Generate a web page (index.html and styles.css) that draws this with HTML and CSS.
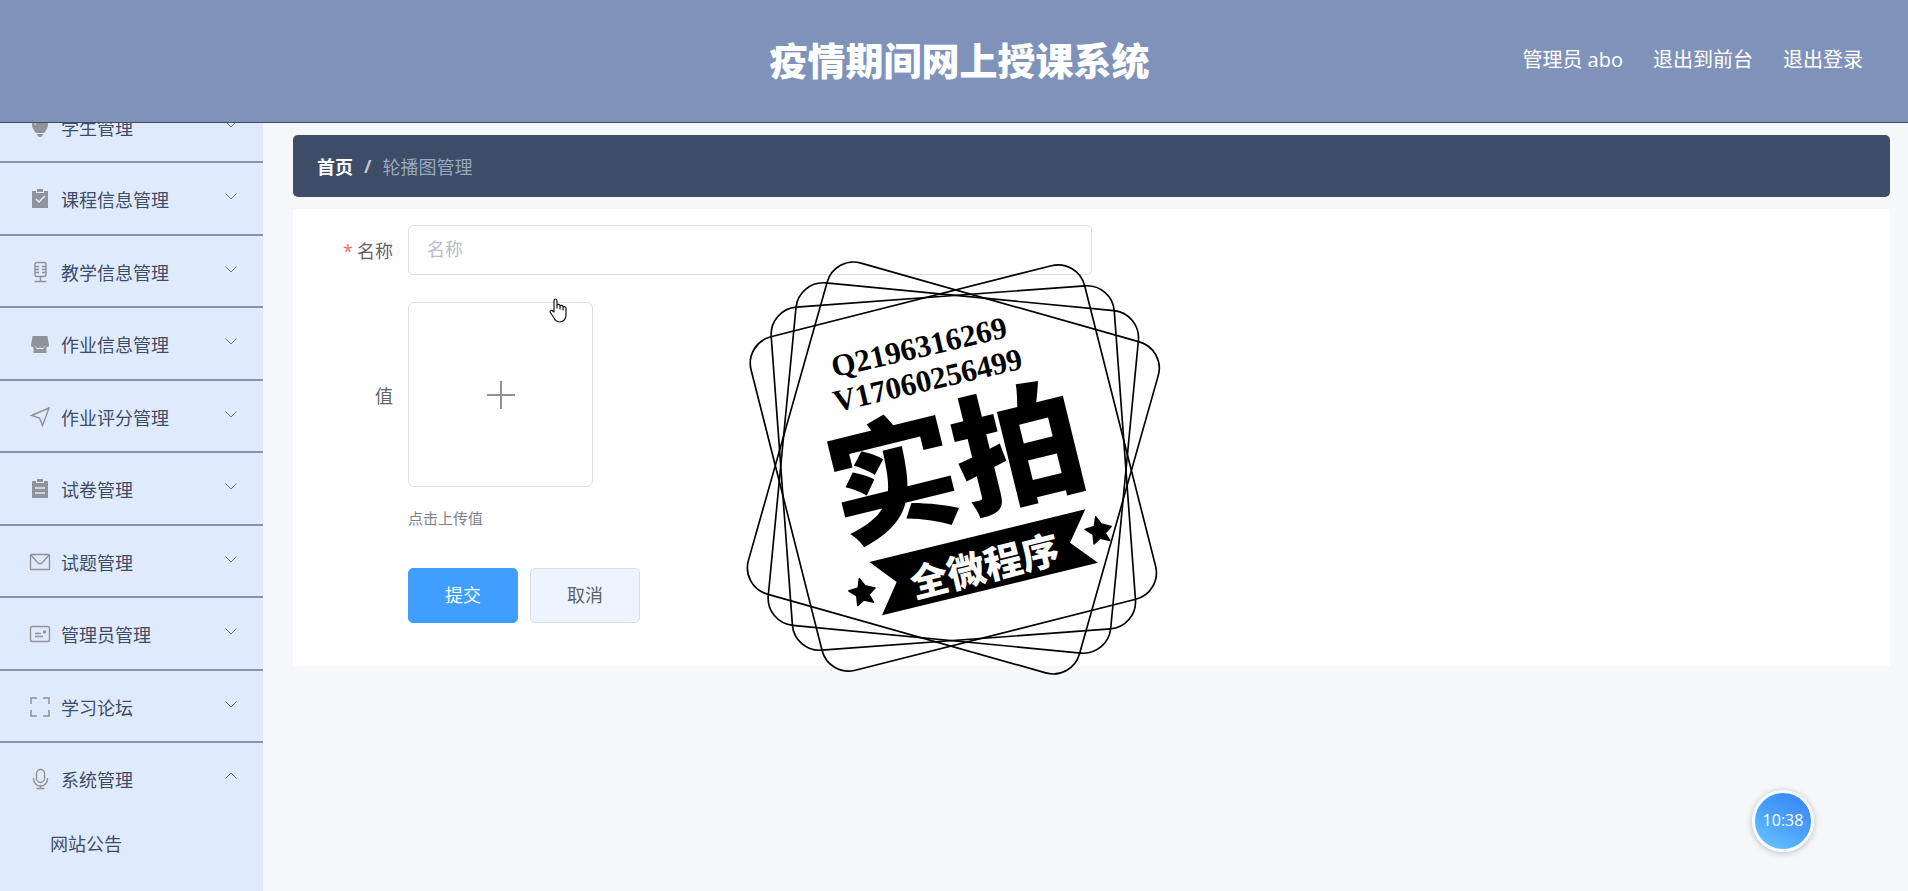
FILE: index.html
```html
<!DOCTYPE html>
<html lang="zh-CN">
<head>
    <meta charset="UTF-8">
    <meta name="viewport" content="width=device-width, initial-scale=1.0">
    <title>疫情期间网上授课系统</title>
    <link rel="stylesheet" href="styles.css">
</head>
<body>
    <svg width="0" height="0" class="sprite" aria-hidden="true">
        <symbol id="arrow" viewBox="0 0 12 12"><path d="M0.500 3.500 6 9 11.500 3.500" fill="none" stroke="currentColor"/></symbol>
    </svg>

    <header class="header">
        <h1 class="title">疫情期间网上授课系统</h1>
        <div class="user-nav">
            <span>管理员 abo</span>
            <a href="#">退出到前台</a>
            <a href="#">退出登录</a>
        </div>
    </header>

    <div class="container">
        <!-- Side menu -->
        <nav class="sidebar">
            <ul class="menu">
                <li class="menu-item">
                    <button type="button" class="menu-title">
                        <svg class="icon" viewBox="0 0 24 24"><path d="M12 2a8 8 0 0 1 8 8c0 3-2 5-4 8H8c-2-3-4-5-4-8a8 8 0 0 1 8-8z" fill="currentColor"/><path d="M9 19h6v1l-2 2h-2l-2-2z" fill="currentColor"/><path d="M7 10a5 5 0 0 1 4-5" fill="none" stroke="#e0eafd"/></svg>
                        <span>学生管理</span>
                        <svg class="arrow"><use href="#arrow"/></svg>
                    </button>
                </li>
                <li class="menu-item">
                    <button type="button" class="menu-title">
                        <svg class="icon" viewBox="0 0 24 24"><path d="M4 4h4v2h8V4h4v17H4zM9 2h6v3H9z" fill="currentColor"/><path d="m8 12 3 3 6-6" fill="none" stroke="#e0eafd" stroke-width="1.500"/></svg>
                        <span>课程信息管理</span>
                        <svg class="arrow"><use href="#arrow"/></svg>
                    </button>
                </li>
                <li class="menu-item">
                    <button type="button" class="menu-title">
                        <svg class="icon" viewBox="0 0 24 24" fill="none" stroke="currentColor" stroke-width="1.400"><rect x="7" y="2.500" width="11" height="14" rx="2"/><path d="M7 6.500h4M7 9.500h4M7 12.500h4M14 6.500h4M14 9.500h4M14 12.500h4M12.500 16.500V21M6.500 21.500h12"/></svg>
                        <span>教学信息管理</span>
                        <svg class="arrow"><use href="#arrow"/></svg>
                    </button>
                </li>
                <li class="menu-item">
                    <button type="button" class="menu-title">
                        <svg class="icon" viewBox="0 0 24 24" fill="currentColor"><path d="M4.500 4h15l1.500 9.500q0 1.500-2 1.500-1.500 0-2.500-1-1 1-2.300 1T12 14q-1 1-2.200 1T7.500 14q-1 1-2.500 1-2 0-2-1.500z"/><path d="M5.500 14.500h13V21h-13z"/><path d="M8 15.500q1.500 2 4 .500 2.500 1.500 4-.500" fill="none" stroke="#e0eafd" stroke-width="1.200"/></svg>
                        <span>作业信息管理</span>
                        <svg class="arrow"><use href="#arrow"/></svg>
                    </button>
                </li>
                <li class="menu-item">
                    <button type="button" class="menu-title">
                        <svg class="icon" viewBox="0 0 24 24" fill="none" stroke="currentColor" stroke-width="1.400"><path d="M21 3 3.500 10.500l8 2.500L14.500 20.500z"/></svg>
                        <span>作业评分管理</span>
                        <svg class="arrow"><use href="#arrow"/></svg>
                    </button>
                </li>
                <li class="menu-item">
                    <button type="button" class="menu-title">
                        <svg class="icon" viewBox="0 0 24 24"><path d="M4 4h4v2h8V4h4v17H4zM9 2h6v3H9z" fill="currentColor"/><path d="M7 11h10M7 16h10" stroke="#e0eafd" stroke-width="1.500"/></svg>
                        <span>试卷管理</span>
                        <svg class="arrow"><use href="#arrow"/></svg>
                    </button>
                </li>
                <li class="menu-item">
                    <button type="button" class="menu-title">
                        <svg class="icon" viewBox="0 0 24 24" fill="none" stroke="currentColor" stroke-width="1.400"><rect x="2.500" y="4.500" width="19" height="15" rx="1"/><path d="m3 5 7 8q2 1.500 4 0l7-8"/></svg>
                        <span>试题管理</span>
                        <svg class="arrow"><use href="#arrow"/></svg>
                    </button>
                </li>
                <li class="menu-item">
                    <button type="button" class="menu-title">
                        <svg class="icon" viewBox="0 0 24 24" fill="none" stroke="currentColor" stroke-width="1.400"><rect x="2.500" y="4.500" width="19" height="15" rx="1.500"/><path d="M7 11.500h6M7 14.500h8"/><circle cx="16.500" cy="10" r="1" fill="currentColor"/></svg>
                        <span>管理员管理</span>
                        <svg class="arrow"><use href="#arrow"/></svg>
                    </button>
                </li>
                <li class="menu-item">
                    <button type="button" class="menu-title">
                        <svg class="icon" viewBox="0 0 24 24" fill="none" stroke="currentColor" stroke-width="1.500"><path d="M3 9V3h6M15 3h6v6M21 15v6h-6M9 21H3v-6"/></svg>
                        <span>学习论坛</span>
                        <svg class="arrow"><use href="#arrow"/></svg>
                    </button>
                </li>
                <li class="menu-item opened">
                    <button type="button" class="menu-title">
                        <svg class="icon" viewBox="0 0 24 24" fill="none" stroke="currentColor" stroke-width="1.400"><rect x="8.500" y="2.500" width="8" height="13" rx="4"/><path d="M5.500 11v1a7 7 0 0 0 14 0v-1M12.500 19v2.500M8.500 21.500h8"/></svg>
                        <span>系统管理</span>
                        <svg class="arrow"><use href="#arrow"/></svg>
                    </button>
                    <a href="#" class="submenu-item">网站公告</a>
                </li>
            </ul>
        </nav>

        <main class="main">
            <div class="breadcrumb">
                <a href="#">首页</a>
                <span class="separator">/</span>
                <span>轮播图管理</span>
            </div>

            <div class="card">
                <form class="form">
                    <div class="form-item">
                        <label for="name" class="required">名称</label>
                        <input type="text" id="name" placeholder="名称">
                    </div>
                    <div class="form-item">
                        <label for="upload">值</label>
                        <button type="button" class="upload" id="upload" aria-label="上传">
                            <svg width="28" height="28" viewBox="0 0 28 28"><path d="M14 0v28M0 14h28" stroke="#8c939d" stroke-width="2"/></svg>
                        </button>
                    </div>
                    <p class="tip">点击上传值</p>
                    <div class="buttons">
                        <button type="submit" class="btn btn-primary">提交</button>
                        <button type="button" class="btn">取消</button>
                    </div>
                </form>
            </div>
        </main>
    </div>

    <!-- Stamp over the page -->
    <svg class="stamp" viewBox="0 0 1350 1350">
        <g fill="none" stroke="#000" stroke-width="5">
            <rect x="154" y="168" width="1032" height="1032" rx="82" transform="rotate(-14.200 670 684)"/>
            <rect x="154" y="168" width="1032" height="1032" rx="82" transform="rotate(-4.200 670 684)"/>
            <rect x="154" y="168" width="1032" height="1032" rx="82" transform="rotate(5.500 670 684)"/>
            <rect x="154" y="168" width="1032" height="1032" rx="82" transform="rotate(15.800 670 684)"/>
        </g>
        <text class="stamp-contact" transform="translate(312 412) rotate(-13)">Q2196316269</text>
        <text class="stamp-contact" transform="translate(318 516) rotate(-13)">V17060256499</text>
        <text class="stamp-big" transform="translate(336 900) rotate(-13.800)">实拍</text>
        <path d="M418 966 1066 808 1020 908 1104 968 456 1126 500 1026z"/>
        <text class="stamp-small" transform="translate(553 1075) rotate(-14)">全微程序</text>
        <g stroke="#000" stroke-width="4" stroke-linejoin="round">
            <path id="star" d="M388 1015 405 1037 435 1044 417 1064 431 1087 402 1080 383 1097 380 1068 356 1053 384 1044z"/>
            <use href="#star" x="709" y="-185"/>
        </g>
    </svg>

    <div class="clock">10:38</div>

    <svg class="cursor" viewBox="0 0 20 25"><path d="M6 14V3q0-2 1.500-2T9 3v7-3q2-1.500 3 .500V11 8q2-1.500 3 .500V12 9q2-1 3 1v7q0 6-6 7-4 0-6-4l-4-6q0-2 2-1.500z" fill="#fff" stroke="#111" stroke-width="1.200" stroke-linejoin="round"/></svg>
</body>
</html>
```
FILE: styles.css
```css
* {
    box-sizing: border-box;
}
body {
    margin: 0;
    height: 100vh;
    display: flex;
    flex-direction: column;
    overflow: hidden;
    font-family: "Open Sans", "Noto Sans CJK SC", sans-serif;
    font-size: 18px;
    color: #606266;
    background-color: #f5f7fb;
}
button, input {
    font: inherit;
    color: inherit;
}
button {
    cursor: pointer;
}
a {
    color: inherit;
    text-decoration: none;
}
.sprite {
    position: absolute;
}

/* header */
.header {
    flex: none;
    height: 123px;
    display: grid;
    grid-template-columns: 1fr auto 1fr;
    align-items: center;
    padding: 0 45px 5px 56px;
    background-color: #7f93ba;
    border-bottom: 1px solid #3d4d68;
    color: #fff;
}
.title {
    grid-column: 2;
    margin: 0;
    font-size: 38px;
    font-weight: 900;
}
.user-nav {
    display: flex;
    justify-content: flex-end;
    gap: 30px;
    font-size: 20px;
}

.container {
    flex: 1;
    display: flex;
    min-height: 0;
}

/* side menu */
.sidebar {
    flex: none;
    width: 263px;
    overflow: hidden;
    background-color: #e0eafd;
}
.menu {
    list-style: none;
    margin: -32px 0 0;
    padding: 0;
    color: #3d4d68;
}
.menu-item {
    height: 72px;
    border-bottom: 2px solid #8294b0;
}
.menu-item:nth-child(even) {
    height: 73px;
}
.menu-item.opened {
    height: auto;
    border-bottom: none;
}
.menu-title {
    display: flex;
    align-items: center;
    gap: 9px;
    width: 100%;
    height: 70px;
    padding: 2px 26px 0 28px;
    border: none;
    background: none;
}
.icon {
    width: 24px;
    height: 24px;
    color: #909399;
}
.arrow {
    width: 12px;
    height: 12px;
    margin: 0 0 6px auto;
    color: #6f7682;
}
.opened .arrow {
    transform: rotate(180deg);
}
.submenu-item {
    display: block;
    padding-left: 50px;
    line-height: 62px;
}

/* content */
.main {
    flex: 1;
    padding: 12px 18px 12px 30px;
}
.breadcrumb {
    display: flex;
    align-items: center;
    height: 62px;
    padding: 0 24px;
    border-radius: 5px;
    background-color: #3d4d68;
    color: #97a8be;
}
.breadcrumb a {
    color: #fff;
    font-weight: 700;
}
.separator {
    margin: 0 11px;
    font-weight: 700;
    color: #c0c4cc;
}
.card {
    margin-top: 12px;
    padding: 16px 0 43px;
    background-color: #fff;
}
.form {
    width: 50%;
}
.form-item {
    display: flex;
    align-items: center;
    margin-bottom: 27px;
}
.form-item label {
    flex: none;
    width: 115px;
    padding-right: 15px;
    text-align: right;
}
.required::before {
    content: "*";
    margin-right: 4px;
    color: #f56c6c;
}
.form-item input {
    flex: 1;
    min-width: 0;
    height: 50px;
    padding: 0 18px 2px;
    border: 1px solid #dcdfe6;
    border-radius: 5px;
    background-color: #fff;
}
.form-item input::placeholder {
    color: #b9bdc6;
}
.upload {
    display: flex;
    align-items: center;
    justify-content: center;
    width: 185px;
    height: 185px;
    border: 1px solid #dcdfe6;
    border-radius: 6px;
    background-color: #fff;
}
.tip {
    margin: -8px 0 37px 115px;
    font-size: 15px;
    line-height: 25px;
    color: #7c838f;
}
.buttons {
    display: flex;
    gap: 12px;
    margin-left: 115px;
}
.btn {
    width: 110px;
    height: 55px;
    padding: 0 0 4px;
    border: 1px solid #d3dff0;
    border-radius: 5px;
    background-color: #ecf4ff;
}
.btn-primary {
    border-color: #409eff;
    background-color: #409eff;
    color: #fff;
}

/* floating things */
.stamp {
    position: absolute;
    top: 240px;
    left: 730px;
    width: 450px;
    height: 450px;
    pointer-events: none;
}
.stamp-contact {
    font-family: "Liberation Serif", serif;
    font-size: 93px;
    font-weight: 700;
}
.stamp-big {
    font-family: "Noto Sans CJK SC", sans-serif;
    font-size: 386px;
    font-weight: 900;
}
.stamp-small {
    font-family: "Noto Sans CJK SC", sans-serif;
    font-size: 114px;
    font-weight: 900;
    fill: #fff;
}
.clock {
    position: absolute;
    right: 94px;
    bottom: 39px;
    width: 62px;
    height: 62px;
    border: 3px solid #f4fbff;
    border-radius: 50%;
    background: linear-gradient(30deg, #6cc8ff, #4aa0fb 50%, #3584f2);
    box-shadow: 0 1px 6px rgba(0, 0, 0, 0.25);
    color: #fff;
    font-size: 16px;
    line-height: 54px;
    text-align: center;
}
.cursor {
    position: absolute;
    top: 298px;
    left: 548px;
    width: 20px;
    height: 25px;
}
```
